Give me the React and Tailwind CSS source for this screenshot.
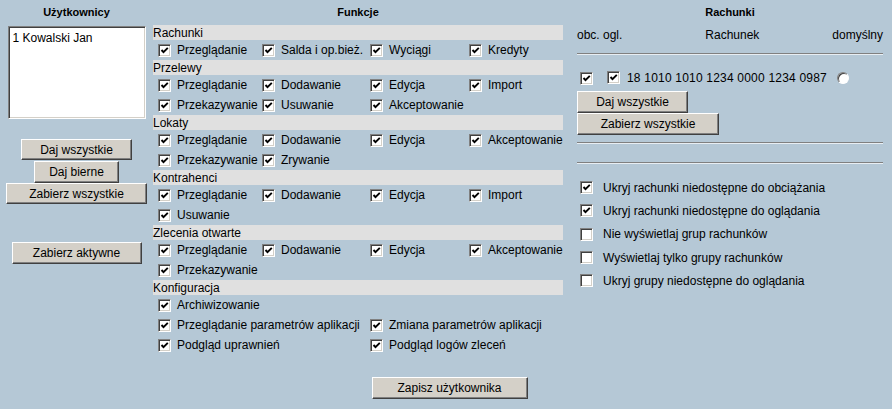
import React from "react";

const Check = ({ checked = true }) => (
  <span className="inline-flex h-[13px] w-[13px] shrink-0 items-center justify-center border border-t-[#808080] border-l-[#808080] border-r-white border-b-white bg-white shadow-[inset_1px_1px_#404040,inset_-1px_-1px_#d4d0c8]">
    {checked && (
      <svg width="9" height="9" viewBox="0 0 9 9">
        <polyline points="1.5,4 3.5,6.2 7.8,1.8" fill="none" stroke="#000" strokeWidth="1.9" />
      </svg>
    )}
  </span>
);

const Btn = ({ children, className = "" }) => (
  <button
    type="button"
    className={`flex items-center justify-center border border-t-white border-l-white border-r-[#404040] border-b-[#404040] bg-[#d4d0c8] text-[12px] text-black shadow-[inset_-1px_-1px_#808080] ${className}`}
  >
    {children}
  </button>
);

const Item = ({ label, span = "" }) => (
  <div className={`flex items-center gap-[6px] pl-[2px] whitespace-nowrap ${span}`}>
    <Check />
    <span>{label}</span>
  </div>
);

// sekcje uprawnien - kazdy wiersz to lista [label, span]
const sections = [
  {
    name: "Rachunki",
    rows: [[["Przeglądanie"], ["Salda i op.bież."], ["Wyciągi"], ["Kredyty"]]],
  },
  {
    name: "Przelewy",
    rows: [
      [["Przeglądanie"], ["Dodawanie"], ["Edycja"], ["Import"]],
      [["Przekazywanie"], ["Usuwanie"], ["Akceptowanie"]],
    ],
  },
  {
    name: "Lokaty",
    rows: [
      [["Przeglądanie"], ["Dodawanie"], ["Edycja"], ["Akceptowanie"]],
      [["Przekazywanie"], ["Zrywanie"]],
    ],
  },
  {
    name: "Kontrahenci",
    rows: [
      [["Przeglądanie"], ["Dodawanie"], ["Edycja"], ["Import"]],
      [["Usuwanie"]],
    ],
  },
  {
    name: "Zlecenia otwarte",
    rows: [
      [["Przeglądanie"], ["Dodawanie"], ["Edycja"], ["Akceptowanie"]],
      [["Przekazywanie"]],
    ],
  },
  {
    name: "Konfiguracja",
    rows: [
      [["Archiwizowanie"]],
      [
        ["Przeglądanie parametrów aplikacji", "col-span-2"],
        ["Zmiana parametrów aplikacji", "col-span-2"],
      ],
      [
        ["Podgląd uprawnień", "col-span-2"],
        ["Podgląd logów zleceń", "col-span-2"],
      ],
    ],
  },
];

const options = [
  ["Ukryj rachunki niedostępne do obciążania", true],
  ["Ukryj rachunki niedostępne do oglądania", true],
  ["Nie wyświetlaj grup rachunków", false],
  ["Wyświetlaj tylko grupy rachunków", false],
  ["Ukryj grupy niedostępne do oglądania", false],
];

const Rule = () => <div className="h-[2px] border-t border-t-[#808080] border-b border-b-[#e8eef3]" />;

export default function App() {
  return (
    <div className="h-[409px] w-[892px] overflow-hidden bg-[#b5c8d6] font-['Liberation_Sans',Arial,sans-serif] text-[12px] text-black">
      <div className="flex">
        {/* Uzytkownicy */}
        <div className="flex w-[153px] shrink-0 flex-col items-center">
          <div className="flex h-[25px] items-center text-[11px] font-bold">Użytkownicy</div>
          <div className="mt-[1px] h-[93px] w-[138px] border border-t-[#808080] border-l-[#808080] border-r-white border-b-white bg-white px-[3px] pt-[2px] shadow-[inset_1px_1px_#404040,inset_-1px_-1px_#d4d0c8]">
            <div className="pl-[1px]">1 Kowalski Jan</div>
          </div>
          <Btn className="mt-[20px] h-[21px] w-[111px]">Daj wszystkie</Btn>
          <Btn className="mt-[1px] h-[22px] w-[85px]">Daj bierne</Btn>
          <Btn className="h-[21px] w-[141px]">Zabierz wszystkie</Btn>
          <Btn className="mt-[38px] h-[22px] w-[130px]">Zabierz aktywne</Btn>
        </div>

        {/* Funkcje */}
        <div className="flex w-[410px] shrink-0 flex-col">
          <div className="flex h-[25px] items-center justify-center text-[11px] font-bold">Funkcje</div>
          {sections.map((s) => (
            <div key={s.name} className="flex flex-col">
              <div className="flex h-[15px] items-center bg-[#e0e0e0] leading-none">{s.name}</div>
              {s.rows.map((row, i) => (
                <div key={i} className="grid h-[20px] grid-cols-[104px_108px_99px_1fr] pl-[3px]">
                  {row.map(([label, span]) => (
                    <Item key={label} label={label} span={span} />
                  ))}
                </div>
              ))}
            </div>
          ))}
        </div>

        {/* Rachunki */}
        <div className="ml-[14px] flex w-[306px] shrink-0 flex-col">
          <div className="flex h-[25px] items-center justify-center text-[11px] font-bold">Rachunki</div>
          <div className="flex h-[20px] items-center justify-between">
            <span>obc. ogl.</span>
            <span className="pl-[10px]">Rachunek</span>
            <span>domyślny</span>
          </div>
          <div className="mt-[8px]">
            <Rule />
          </div>
          <div className="mt-[13px] flex h-[20px] items-center pl-[3px]">
            <Check />
            <span className="ml-[14px]">
              <Check />
            </span>
            <span className="ml-[7px] tracking-[0.2px]">18 1010 1010 1234 0000 1234 0987</span>
            <span className="ml-[10px] inline-block h-[12px] w-[12px] rounded-full border border-t-[#808080] border-l-[#808080] border-r-white border-b-white bg-white shadow-[inset_1px_1px_#404040]" />
          </div>
          <Btn className="mt-[3px] h-[22px] w-[111px]">Daj wszystkie</Btn>
          <Btn className="h-[22px] w-[142px]">Zabierz wszystkie</Btn>
          <div className="mt-[7px]">
            <Rule />
          </div>
          <div className="mt-[18px]">
            <Rule />
          </div>
          <div className="mt-[12px] flex flex-col">
            {options.map(([label, checked]) => (
              <div key={label} className="flex h-[23.3px] items-center gap-[10px] pl-[3px]">
                <Check checked={checked} />
                <span>{label}</span>
              </div>
            ))}
          </div>
        </div>
      </div>

      <div className="mt-[22px] flex justify-center pl-[7px]">
        <Btn className="h-[22px] w-[156px]">Zapisz użytkownika</Btn>
      </div>
    </div>
  );
}
